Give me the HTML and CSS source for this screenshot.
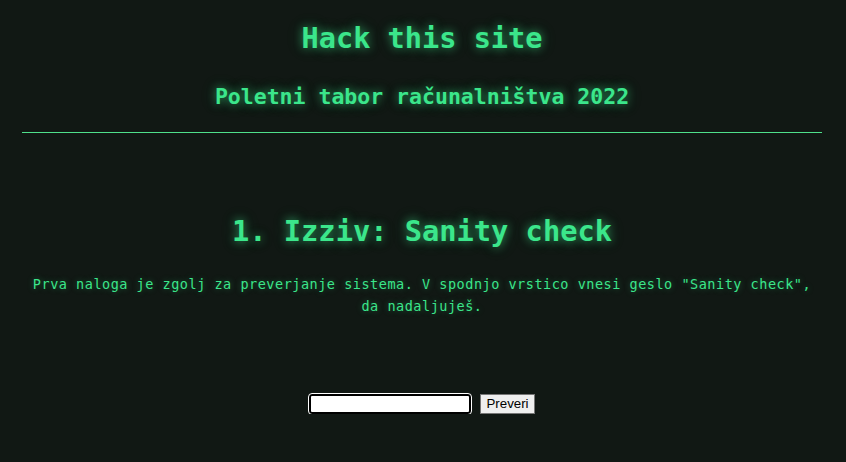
FILE: index.html
```html
<!DOCTYPE html>
<html lang="sl">
<head>
<meta charset="utf-8">
<title>Hack this site</title>
<link rel="stylesheet" href="styles.css">
</head>
<body>
<div class="page">
  <header class="header">
    <h1 class="title">Hack this site</h1>
    <h2 class="subtitle">Poletni tabor računalništva 2022</h2>
  </header>
  <hr class="rule">
  <main class="challenge">
    <h3 class="challenge-title">1. Izziv: Sanity check</h3>
    <p class="challenge-text">Prva naloga je zgolj za preverjanje sistema. V spodnjo vrstico vnesi geslo "Sanity check", da nadaljuješ.</p>
    <form class="answer" onsubmit="return false">
      <input class="answer-input" type="text">
      <button class="answer-button" type="submit">Preveri</button>
    </form>
  </main>
</div>
</body>
</html>
```
FILE: styles.css
```css
html, body {
  margin: 0;
  padding: 0;
  background: #111814;
}
body {
  font-family: "DejaVu Sans Mono", "Liberation Mono", monospace;
  color: #3be68b;
}
.page {
  width: 800px;
  margin: 0 0 0 22px;
  padding-top: 20px;
  display: flex;
  flex-direction: column;
  align-items: stretch;
}
.header {
  display: flex;
  flex-direction: column;
  align-items: center;
}
.title,
.subtitle,
.challenge-title {
  margin: 0;
  font-weight: bold;
  text-align: center;
  text-shadow: 0 0 8px rgba(59, 230, 139, 0.55), 0 0 16px rgba(59, 230, 139, 0.25);
}
.title {
  font-size: 28.6px;
  line-height: 36px;
}
.subtitle {
  margin-top: 27px;
  font-size: 21.5px;
  line-height: 28px;
}
.rule {
  margin: 21px 0 0 0;
  border: 0;
  height: 1px;
  background: #4fe08b;
}
.challenge {
  display: flex;
  flex-direction: column;
  align-items: center;
  padding-top: 80px;
}
.challenge-title {
  font-size: 28.7px;
  line-height: 36px;
}
.challenge-text {
  margin: 24px 0 0 0;
  font-size: 13.5px;
  line-height: 22px;
  letter-spacing: 0.52px;
  text-align: center;
  text-shadow: 0 0 6px rgba(59, 230, 139, 0.35);
}
.answer {
  margin-top: 77px;
  display: flex;
  align-items: center;
  gap: 9px;
}
.answer-input {
  box-sizing: border-box;
  width: 162px;
  height: 20px;
  margin: 0;
  padding: 0 3px;
  background: #fff;
  border: 2px solid #000;
  border-radius: 3px;
  outline: 1px solid #fff;
  outline-offset: 0;
  font-family: "Liberation Sans", Arial, sans-serif;
  font-size: 13px;
}
.answer-button {
  box-sizing: border-box;
  height: 20px;
  margin: 0;
  padding: 0 5px;
  background: #efefef;
  border: 1px solid #767676;
  border-radius: 0;
  color: #000;
  font-family: "Liberation Sans", Arial, sans-serif;
  font-size: 13.3px;
  line-height: 16px;
}
```
